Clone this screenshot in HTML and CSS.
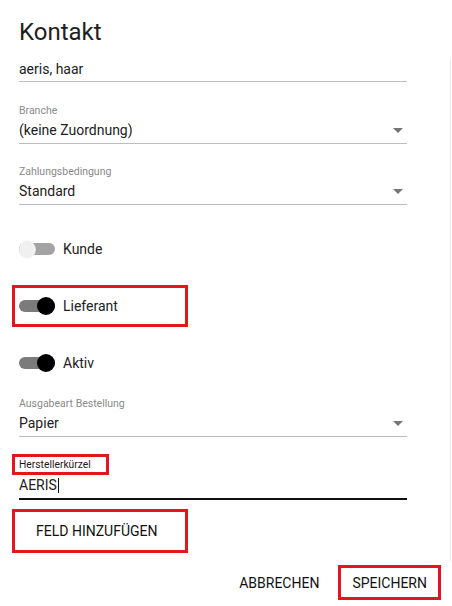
FILE: index.html
```html
<!DOCTYPE html>
<html lang="de">
<head>
<meta charset="utf-8">
<title>Kontakt</title>
<link rel="stylesheet" href="styles.css">
</head>
<body>
<div class="dialog">
  <h1 class="title">Kontakt</h1>
  <div class="form">
    <div class="field plain">
      <div class="value">aeris, haar</div>
    </div>

    <div class="field select f-branche">
      <div class="label">Branche</div>
      <div class="value-row">
        <div class="value">(keine Zuordnung)</div>
        <svg class="arrow" width="10" height="5" viewBox="0 0 10 5"><path d="M0 0h10L5 5z" fill="#757575"/></svg>
      </div>
    </div>

    <div class="field select f-zahlung">
      <div class="label">Zahlungsbedingung</div>
      <div class="value-row">
        <div class="value">Standard</div>
        <svg class="arrow" width="10" height="5" viewBox="0 0 10 5"><path d="M0 0h10L5 5z" fill="#757575"/></svg>
      </div>
    </div>

    <div class="toggle-row t-kunde">
      <div class="track off"><div class="thumb"></div></div>
      <span class="toggle-label">Kunde</span>
    </div>

    <div class="toggle-row t-lieferant marked">
      <div class="track on"><div class="thumb"></div></div>
      <span class="toggle-label">Lieferant</span>
    </div>

    <div class="toggle-row t-aktiv">
      <div class="track on"><div class="thumb"></div></div>
      <span class="toggle-label">Aktiv</span>
    </div>

    <div class="field select f-ausgabe">
      <div class="label">Ausgabeart Bestellung</div>
      <div class="value-row">
        <div class="value">Papier</div>
        <svg class="arrow" width="10" height="5" viewBox="0 0 10 5"><path d="M0 0h10L5 5z" fill="#757575"/></svg>
      </div>
    </div>

    <div class="field focused f-hersteller">
      <div class="label-box"><span class="label">Herstellerkürzel</span></div>
      <div class="value">AERIS<span class="caret"></span></div>
    </div>

    <button class="btn add-btn">FELD HINZUFÜGEN</button>
  </div>

  <div class="actions">
    <button class="btn">ABBRECHEN</button>
    <button class="btn marked-btn">SPEICHERN</button>
  </div>
</div>
</body>
</html>
```

FILE: styles.css
```css
* { box-sizing: border-box; }

html, body {
  margin: 0;
  padding: 0;
  background: #ffffff;
}

body {
  font-family: Roboto, "Liberation Sans", Arial, sans-serif;
  color: #212121;
  width: 452px;
  height: 606px;
  overflow: hidden;
}

.dialog {
  display: flex;
  flex-direction: column;
}

.title {
  margin: 18px 0 0 0;
  padding-left: 19px;
  font-size: 24px;
  line-height: 28px;
  font-weight: 400;
  color: #1e1e1e;
}

.form {
  margin-top: 13px;
  width: 451px;
  padding: 0 0 8px 19px;
  border-right: 1px solid #ebebeb;
  display: flex;
  flex-direction: column;
  align-items: flex-start;
}

.field {
  width: 388px;
  border-bottom: 1px solid #bdbdbd;
  padding-bottom: 3px;
}

.field.plain { padding-bottom: 2px; }

.label {
  font-size: 10.5px;
  line-height: 14px;
  color: #8a8a8a;
  margin-bottom: 2px;
  display: block;
}

.value {
  font-size: 14px;
  line-height: 20px;
  color: #212121;
}

.value-row {
  display: flex;
  align-items: center;
  justify-content: space-between;
  padding-right: 4px;
}

.arrow { display: block; }

.f-branche { margin-top: 22px; }
.f-zahlung { margin-top: 21px; }
.f-ausgabe { margin-top: 24px; }

/* toggles */
.toggle-row {
  display: flex;
  align-items: center;
  height: 20px;
  gap: 8px;
}

.t-kunde { margin-top: 34px; }

.t-lieferant {
  margin-top: 26px;
  margin-left: -7px;
  width: 176px;
  height: 42px;
  padding: 8px 4px;
}

.t-aktiv { margin-top: 26px; }

.marked { border: 3px solid #e3161e; }

.track {
  width: 36px;
  height: 12px;
  border-radius: 6px;
  display: flex;
  align-items: center;
}

.track.on {
  background: #7b7b7b;
  justify-content: flex-end;
}

.track.off {
  background: #a3a3a3;
  justify-content: flex-start;
}

.thumb {
  border-radius: 50%;
  flex: none;
}

.track.on .thumb {
  width: 18px;
  height: 18px;
  margin: -3px 0;
  background: #000000;
}

.track.off .thumb {
  width: 17px;
  height: 17px;
  margin: -3px 0;
  background: #f0f0f0;
  box-shadow: 0 0 1px rgba(0,0,0,0.1);
}

.toggle-label {
  font-size: 14px;
  line-height: 20px;
  color: #212121;
}

/* focused field */
.f-hersteller {
  margin-top: 16px;
  border-bottom: 2px solid #111111;
  padding-bottom: 3px;
}

.label-box {
  display: inline-block;
  margin-left: -7px;
  padding: 0 15px 0 4px;
  border: 3px solid #e3161e;
  height: 21px;
}

.f-hersteller .label {
  color: #1a1a1a;
  font-size: 10.3px;
  line-height: 15px;
  margin: 0;
}

.f-hersteller .value {
  margin-top: 0;
  display: flex;
  align-items: center;
}

.caret {
  display: inline-block;
  width: 1px;
  height: 15px;
  background: #111;
  margin-left: 1px;
}

/* buttons */
.btn {
  font-family: Roboto, "Liberation Sans", Arial, sans-serif;
  font-size: 14px;
  font-weight: 400;
  color: #111111;
  background: transparent;
  border: 3px solid transparent;
  height: 35px;
  padding: 0 12px;
  letter-spacing: 0;
  cursor: pointer;
}

.add-btn {
  margin-top: 9px;
  margin-left: -7px;
  width: 176px;
  height: 44px;
  text-align: left;
  padding-left: 21px;
  border-color: #e3161e;
}

.actions {
  margin-top: 4px;
  display: flex;
  justify-content: flex-end;
  gap: 4px;
  padding-right: 11px;
}

.marked-btn {
  border-color: #e3161e;
  padding: 0 11px;
}
```
